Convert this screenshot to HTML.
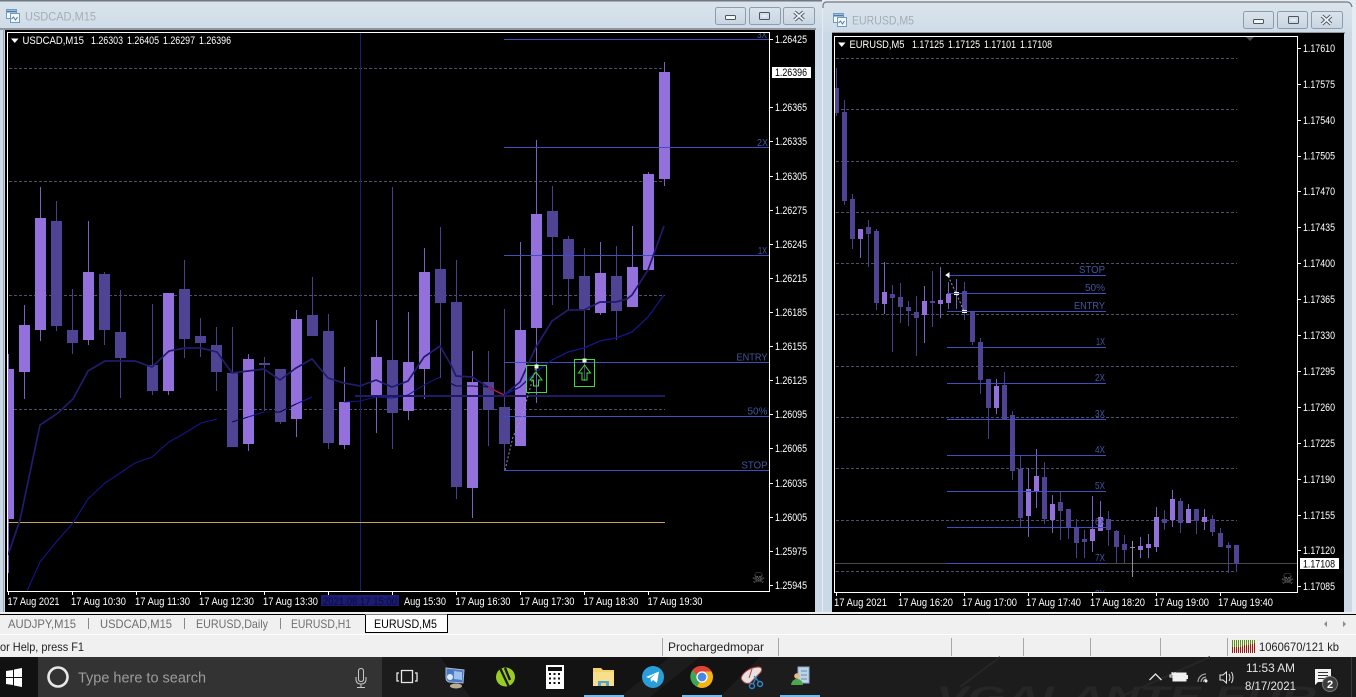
<!DOCTYPE html>
<html><head><meta charset="utf-8"><title>MetaTrader</title>
<style>
html,body{margin:0;padding:0;background:#000;width:1356px;height:697px;overflow:hidden}
svg{display:block;font-family:"Liberation Sans",sans-serif}
.w{fill:#fff;font-size:10.8px}
.k{fill:#000;font-size:10.8px}
.l{fill:#44559c;font-size:10.4px}
.t{fill:#a3adb7;font-size:12px}
.tab{fill:#6e6e6e;font-size:12px}
.st{fill:#222;font-size:12px}
.tk{fill:#e6e6e6;font-size:12px}
.btn{fill:url(#bg);stroke:#8b9dac;stroke-width:1}
</style></head><body>
<svg width="1356" height="697" viewBox="0 0 1356 697" xmlns="http://www.w3.org/2000/svg">
<defs>
<linearGradient id="tg" x1="0" y1="0" x2="0" y2="1"><stop offset="0" stop-color="#dbe4ec"/><stop offset="1" stop-color="#cfdce8"/></linearGradient>
<linearGradient id="bg" x1="0" y1="0" x2="0" y2="1"><stop offset="0" stop-color="#dbe4ec"/><stop offset="1" stop-color="#c8d5e1"/></linearGradient>
<clipPath id="c1"><rect x="8" y="33" width="761" height="558"/></clipPath>
<clipPath id="c2"><rect x="835" y="37" width="462" height="555"/></clipPath>
</defs>

<!-- window frames -->
<rect width="1356" height="614" fill="#e6ecf2"/>
<rect x="0" y="0" width="822" height="614" fill="#cbd8e5"/>
<rect x="0" y="0" width="822" height="28" fill="url(#tg)"/>
<rect x="0" y="0" width="822" height="1.5" fill="#6f7780"/>
<rect x="0" y="28" width="816" height="2" fill="#8e959c"/>
<rect x="3" y="29" width="1" height="583" fill="#9aa6b2"/>
<rect x="5" y="30" width="810" height="582" fill="#000"/>

<path d="M823 614V6q0-4 4-4H1347q4 0 5 5V614z" fill="#cbd8e5"/>
<path d="M823 32V6q0-4 4-4H1347q4 0 5 5V32z" fill="url(#tg)"/>
<path d="M823 8V6q0-4 4-4H1347q4 0 5 5" fill="none" stroke="#6f7780" stroke-width="1.2"/>
<rect x="832" y="32" width="513" height="2" fill="#8e959c"/>
<rect x="832" y="33" width="512" height="579" fill="#000"/>

<!-- titles -->
<g fill="#f4f8fb" stroke="#6f9ac6" stroke-width="1"><rect x="6.5" y="9.5" width="10" height="9"/><rect x="10.5" y="13.5" width="9" height="9"/></g>
<path d="M11.5 19l2-2 2 3 2-3" fill="none" stroke="#4d7ca8"/><path d="M7 11.5h9" stroke="#4d7ca8" stroke-width="2"/>
<text class="t" x="25" y="20.5" textLength="71" lengthAdjust="spacingAndGlyphs">USDCAD,M15</text>
<g fill="#f4f8fb" stroke="#6f9ac6" stroke-width="1"><rect x="833.5" y="13.5" width="10" height="9"/><rect x="837.5" y="17.5" width="9" height="9"/></g>
<path d="M838.5 23l2-2 2 3 2-3" fill="none" stroke="#4d7ca8"/><path d="M834 15.5h9" stroke="#4d7ca8" stroke-width="2"/>
<text class="t" x="852" y="24.5" textLength="62" lengthAdjust="spacingAndGlyphs">EURUSD,M5</text>

<!-- window buttons left -->
<rect class="btn" x="715.5" y="7.5" width="30" height="17" rx="2"/>
<rect class="btn" x="749.5" y="7.5" width="31" height="17" rx="2"/>
<rect class="btn" x="783.5" y="7.5" width="31" height="17" rx="2"/>
<rect x="725.5" y="15.5" width="10" height="4" rx="1" fill="#f4f6f8" stroke="#4a5560"/>
<rect x="759.5" y="12.5" width="10" height="7" rx="1" fill="none" stroke="#4a5560"/><rect x="762" y="15" width="5" height="2" fill="#e8edf2"/>
<path d="M794.5 12l9 8M803.5 12l-9 8" stroke="#4a5560" stroke-width="3.6"/><path d="M794.5 12l9 8M803.5 12l-9 8" stroke="#f2f5f7" stroke-width="1.8"/>
<!-- window buttons right -->
<rect class="btn" x="1243.5" y="11.5" width="30" height="17" rx="2"/>
<rect class="btn" x="1277.5" y="11.5" width="30" height="17" rx="2"/>
<rect class="btn" x="1311.5" y="11.5" width="31" height="17" rx="2"/>
<rect x="1253.5" y="19.5" width="10" height="4" rx="1" fill="#f4f6f8" stroke="#4a5560"/>
<rect x="1288.5" y="16.5" width="10" height="7" rx="1" fill="none" stroke="#4a5560"/><rect x="1291" y="19" width="5" height="2" fill="#e8edf2"/>
<path d="M1322 16l9 8M1331 16l-9 8" stroke="#4a5560" stroke-width="3.6"/><path d="M1322 16l9 8M1331 16l-9 8" stroke="#f2f5f7" stroke-width="1.8"/>

<!-- LEFT CHART -->
<g clip-path="url(#c1)" shape-rendering="crispEdges">
<path d="M9 68.5H665M9 181.5H665M9 295.5H665M9 409.5H665" stroke="#4e4e6e" stroke-dasharray="3 2" fill="none"/>
<path d="M360.5 33V591" stroke="#1e1e72"/>
<path fill="none" stroke="#7a62bb" d="M8.5 354V573M24.5 305V399M40.5 187V341M88.5 221V345M168.5 293V395M248.5 354V451M296.5 310V437M344.5 367V449M376.5 320V433M408.5 312V420M424.5 248V399M472.5 351V518M520.5 242V446M536.5 140V403M600.5 242V315M632.5 226V307M648.5 172V270M664.5 62V186"/>
<path fill="none" stroke="#4a3f8e" d="M56.5 201V331M72.5 289V354M104.5 272V345M120.5 290V398M152.5 304V395M184.5 260V358M200.5 318V357M216.5 327V391M232.5 327V447M264.5 357V411M280.5 369V424M312.5 277V336M328.5 314V449M392.5 187V449M440.5 227V378M456.5 260V499M488.5 351V446M504.5 309V470M552.5 186V305M568.5 236V310M584.5 248V381M616.5 246V340"/>
<path fill="#9370db" d="M8 369h6v150h-6zM19 325h11v47h-11zM35 218h11v112h-11zM83 272h11v68h-11zM163 293h11v98h-11zM243 359h11v85h-11zM291 319h11v100h-11zM339 402h11v43h-11zM371 357h11v40h-11zM403 362h11v49h-11zM419 272h11v97h-11zM467 382h11v106h-11zM515 330h11v116h-11zM531 214h11v114h-11zM595 273h11v40h-11zM627 267h11v40h-11zM643 174h11v96h-11zM659 72h11v107h-11z"/>
<path fill="#4f4394" d="M51 221h11v105h-11zM67 330h11v13h-11zM99 274h11v56h-11zM115 332h11v26h-11zM147 365h11v26h-11zM179 289h11v50h-11zM195 336h11v7h-11zM211 345h11v27h-11zM227 373h11v74h-11zM259 363h11v2h-11zM275 369h11v53h-11zM307 315h11v21h-11zM323 331h11v112h-11zM387 360h11v53h-11zM435 269h11v34h-11zM451 302h11v185h-11zM483 382h11v28h-11zM499 407h11v37h-11zM547 211h11v26h-11zM563 239h11v40h-11zM579 276h11v34h-11zM611 276h11v35h-11z"/>
<path d="M8 522.5H665" stroke="#c8a45c"/>
<path d="M355 396H665" stroke="#1e1a64" stroke-width="2"/>
<path d="M504 39.5H769M504 147.5H769M504 255.5H769M504 362.5H769M504 416.5H769M504 470.5H769" stroke="#3f4fc0" fill="none"/>
</g>
<g clip-path="url(#c1)">
<polyline fill="none" stroke="#211c6e" stroke-width="1.7" points="8,555 20,520 40,425 58,413 73,399 88,371 105,361 135,361 152,367 169,351 185,348 201,348 217,352 232,373 248,371 264,369 280,380 296,368 312,359 328,378 344,383 360,386 376,380 392,387 408,381 424,357 440,346 451,365 456,376 472,377 488,387 504,395 520,382 536,347 552,321 568,310 584,310 600,302 616,302 627,299 632,295 648,270 664,226"/>
<polyline fill="none" stroke="#15158c" stroke-width="1.1" points="27,591 40,562 57,541 73,523 88,499 105,483 135,463 152,457 169,442 185,433 201,423 217,419"/>
<polyline fill="none" stroke="#0a0a50" stroke-width="1" points="232,422 248,417"/>
<polyline fill="none" stroke="#1616a8" stroke-width="1" points="248,417 264,412"/>
<polyline fill="none" stroke="#08083a" stroke-width="1" points="264,412 280,412 296,404"/>
<polyline fill="none" stroke="#1616a8" stroke-width="1" points="296,404 312,397"/>
<polyline fill="none" stroke="#15158c" stroke-width="1" points="344,402 360,401 376,397 392,398 408,395 424,385 440,377"/>
<polyline fill="none" stroke="#0d0d3c" stroke-width="1" points="450,383 456,386 472,386 488,387"/>
<polyline fill="none" stroke="#b01c3c" stroke-width="1.3" points="488,387 504,395"/>
<polyline fill="none" stroke="#15158c" stroke-width="1.3" points="504,395 520,387 536,372 552,360 568,352 584,348 600,341 616,338 632,332 648,317 664,295"/>
<polyline fill="none" stroke="#9a94b0" stroke-width="1" stroke-dasharray="2 2" points="505,470 513,437 522,417 536,367"/>
<g fill="none" stroke="#3cdc3c" stroke-width="1.2" shape-rendering="crispEdges">
<rect x="526.5" y="365.5" width="20" height="27"/><rect x="574.5" y="359.5" width="20" height="27"/></g>
<path d="M536 372l-6 8h3.5v6h5v-6h3.5z" fill="none" stroke="#3cdc3c"/>
<path d="M584.5 365l-6 8h3.5v7h5v-7h3.5z" fill="none" stroke="#3cdc3c"/>
<rect x="534.5" y="364.5" width="4" height="4" fill="#d8ffd8"/><rect x="582.5" y="358.5" width="4" height="4" fill="#d8ffd8"/>
<g class="l">
<text x="757" y="38" textLength="10" lengthAdjust="spacingAndGlyphs">3X</text>
<text x="757" y="146" textLength="11" lengthAdjust="spacingAndGlyphs">2X</text>
<text x="758" y="254" textLength="9" lengthAdjust="spacingAndGlyphs">1X</text>
<text x="736.5" y="360.5" textLength="31" lengthAdjust="spacingAndGlyphs">ENTRY</text>
<text x="747.5" y="414.5" textLength="20" lengthAdjust="spacingAndGlyphs">50%</text>
<text x="741.5" y="468.5" textLength="26" lengthAdjust="spacingAndGlyphs">STOP</text>
</g>
<text x="758.5" y="583" text-anchor="middle" font-size="15" fill="#7a7a7a" font-family="DejaVu Sans,sans-serif">☠</text>
</g>
<path d="M7.5 32.5H769.5V591.5H7.5z" fill="none" stroke="#fff"/>
<path d="M770 39.5h3M770 107.5h3M770 141.5h3M770 176.5h3M770 210.5h3M770 244.5h3M770 278.5h3M770 312.5h3M770 346.5h3M770 380.5h3M770 414.5h3M770 448.5h3M770 483.5h3M770 517.5h3M770 551.5h3M770 585.5h3M8.5 592v3M72.5 592v3M136.5 592v3M200.5 592v3M264.5 592v3M328.5 592v3M392.5 592v3M456.5 592v3M520.5 592v3M584.5 592v3M648.5 592v3" stroke="#fff" fill="none"/>
<path d="M11 38.5h7.5l-3.75 4.5z" fill="#fff"/>
<g class="w">
<text x="22.5" y="44" textLength="61.5" lengthAdjust="spacingAndGlyphs">USDCAD,M15</text>
<text x="91" y="44" textLength="32" lengthAdjust="spacingAndGlyphs">1.26303</text>
<text x="127" y="44" textLength="32" lengthAdjust="spacingAndGlyphs">1.26405</text>
<text x="163" y="44" textLength="32" lengthAdjust="spacingAndGlyphs">1.26297</text>
<text x="199" y="44" textLength="32" lengthAdjust="spacingAndGlyphs">1.26396</text>
<text x="775" y="43" textLength="32" lengthAdjust="spacingAndGlyphs">1.26425</text>
<text x="775" y="111" textLength="32" lengthAdjust="spacingAndGlyphs">1.26365</text>
<text x="775" y="145" textLength="32" lengthAdjust="spacingAndGlyphs">1.26335</text>
<text x="775" y="180" textLength="32" lengthAdjust="spacingAndGlyphs">1.26305</text>
<text x="775" y="214" textLength="32" lengthAdjust="spacingAndGlyphs">1.26275</text>
<text x="775" y="248" textLength="32" lengthAdjust="spacingAndGlyphs">1.26245</text>
<text x="775" y="282" textLength="32" lengthAdjust="spacingAndGlyphs">1.26215</text>
<text x="775" y="316" textLength="32" lengthAdjust="spacingAndGlyphs">1.26185</text>
<text x="775" y="350" textLength="32" lengthAdjust="spacingAndGlyphs">1.26155</text>
<text x="775" y="384" textLength="32" lengthAdjust="spacingAndGlyphs">1.26125</text>
<text x="775" y="418" textLength="32" lengthAdjust="spacingAndGlyphs">1.26095</text>
<text x="775" y="452" textLength="32" lengthAdjust="spacingAndGlyphs">1.26065</text>
<text x="775" y="487" textLength="32" lengthAdjust="spacingAndGlyphs">1.26035</text>
<text x="775" y="521" textLength="32" lengthAdjust="spacingAndGlyphs">1.26005</text>
<text x="775" y="555" textLength="32" lengthAdjust="spacingAndGlyphs">1.25975</text>
<text x="775" y="589" textLength="32" lengthAdjust="spacingAndGlyphs">1.25945</text>
<text x="7.5" y="605" textLength="52" lengthAdjust="spacingAndGlyphs">17 Aug 2021</text>
<text x="71" y="605" textLength="55" lengthAdjust="spacingAndGlyphs">17 Aug 10:30</text>
<text x="135" y="605" textLength="55" lengthAdjust="spacingAndGlyphs">17 Aug 11:30</text>
<text x="199" y="605" textLength="55" lengthAdjust="spacingAndGlyphs">17 Aug 12:30</text>
<text x="263" y="605" textLength="55" lengthAdjust="spacingAndGlyphs">17 Aug 13:30</text>
<text x="404" y="605" textLength="42" lengthAdjust="spacingAndGlyphs">Aug 15:30</text>
<text x="455.5" y="605" textLength="55" lengthAdjust="spacingAndGlyphs">17 Aug 16:30</text>
<text x="519.5" y="605" textLength="55" lengthAdjust="spacingAndGlyphs">17 Aug 17:30</text>
<text x="583.5" y="605" textLength="55" lengthAdjust="spacingAndGlyphs">17 Aug 18:30</text>
<text x="647.5" y="605" textLength="55" lengthAdjust="spacingAndGlyphs">17 Aug 19:30</text>
</g>
<rect x="321" y="595" width="78" height="11" fill="#1b1b72"/>
<text x="323" y="605" font-size="10.8" fill="#0b0b3a" textLength="74" lengthAdjust="spacingAndGlyphs">2021.08.17 15:00</text>
<rect x="772" y="67" width="39" height="11" fill="#fff"/>
<text class="k" x="775" y="76" textLength="32" lengthAdjust="spacingAndGlyphs">1.26396</text>

<!-- RIGHT CHART -->
<g clip-path="url(#c2)" shape-rendering="crispEdges">
<path d="M836 58.5H1237M836 109.5H1237M836 161.5H1237M836 212.5H1237M836 263.5H1237M836 314.5H1237M836 366.5H1237M836 417.5H1237M836 468.5H1237M836 520.5H1237M836 571.5H1237" stroke="#4e4e6e" stroke-dasharray="3 2" fill="none"/>
<path d="M835 563.5H1297" stroke="#4a4a4a"/>
<path fill="none" stroke="#4a3f8e" d="M836.5 68V116M844.5 100V205M852.5 194V249M868.5 220V267M876.5 229V310M892.5 285V352M900.5 283V323M908.5 301V326M916.5 296V356M932.5 271V327M964.5 282V320M972.5 312V345M980.5 338V394M988.5 379V439M1004.5 372V419M1012.5 411V480M1020.5 456V527M1044.5 462V524M1060.5 491V540M1068.5 509V539M1076.5 519V558M1084.5 530V558M1108.5 511V546M1116.5 530V563M1124.5 535V563M1164.5 510V530M1180.5 498V533M1196.5 509V534M1212.5 515V536M1220.5 528V547M1228.5 542V573M1236.5 545V572"/>
<path fill="none" stroke="#7a62bb" d="M860.5 229V258M884.5 262V314M924.5 286V343M940.5 267V318M948.5 282V309M956.5 279V309M996.5 379V414M1028.5 468V537M1036.5 449V508M1052.5 495V533M1092.5 496V552M1100.5 501V531M1140.5 537V558M1148.5 534V558M1156.5 507V552M1172.5 490V527M1188.5 504V523M1204.5 509V530"/>
<path fill="none" stroke="#8e8ea0" d="M1132.5 541V577"/>
<path fill="#4f4394" d="M835 88h4v25h-4zM842 112h5v89h-5zM850 199h5v40h-5zM866 227h5v7h-5zM874 231h5v72h-5zM890 294h5v4h-5zM898 297h5v10h-5zM906 307h5v4h-5zM914 312h5v6h-5zM930 301h5v2h-5zM962 291h5v22h-5zM970 312h5v30h-5zM978 342h5v38h-5zM986 379h5v29h-5zM1002 385h5v34h-5zM1010 415h5v56h-5zM1018 469h5v49h-5zM1042 477h5v42h-5zM1058 502h5v9h-5zM1066 509h5v18h-5zM1074 527h5v16h-5zM1082 539h5v3h-5zM1106 519h5v11h-5zM1114 531h5v16h-5zM1122 544h5v6h-5zM1162 519h5v4h-5zM1178 501h5v22h-5zM1194 509h5v12h-5zM1210 519h5v13h-5zM1218 533h5v14h-5zM1226 545h5v3h-5zM1234 545h5v19h-5z"/>
<path fill="#9370db" d="M858 229h5v10h-5zM882 292h5v12h-5zM922 301h5v14h-5zM938 300h5v4h-5zM946 294h5v9h-5zM994 386h5v22h-5zM1026 489h5v27h-5zM1034 476h5v15h-5zM1050 504h5v16h-5zM1090 529h5v12h-5zM1098 517h5v14h-5zM1138 546h5v4h-5zM1146 544h5v4h-5zM1154 517h5v30h-5zM1170 499h5v21h-5zM1186 509h5v14h-5zM1202 517h5v5h-5z"/>
<path fill="#9090a8" d="M1130 547h5v1h-5z"/>
<path d="M947 275.5H1106M947 293.5H1106M947 311.5H1106M947 347.5H1106M947 383.5H1106M947 419.5H1106M947 455.5H1106M947 491.5H1106M947 527.5H1106M947 563.5H1106" stroke="#3f4fc0" fill="none"/>
</g>
<g clip-path="url(#c2)">
<polyline fill="none" stroke="#9a94b0" stroke-dasharray="2 2" points="948,276 956,293 964,311"/>
<path d="M946 275l3-2v4zM954 292.5h5M954 294.5h5M962 310.5h5M962 312.5h5" stroke="#fff" fill="#fff" stroke-width="1"/>
<g class="l">
<text x="1079" y="273" textLength="26" lengthAdjust="spacingAndGlyphs">STOP</text>
<text x="1085" y="291" textLength="20" lengthAdjust="spacingAndGlyphs">50%</text>
<text x="1074" y="309" textLength="31" lengthAdjust="spacingAndGlyphs">ENTRY</text>
<text x="1096" y="345" textLength="9" lengthAdjust="spacingAndGlyphs">1X</text>
<text x="1095" y="381" textLength="10" lengthAdjust="spacingAndGlyphs">2X</text>
<text x="1095" y="417" textLength="10" lengthAdjust="spacingAndGlyphs">3X</text>
<text x="1095" y="453" textLength="10" lengthAdjust="spacingAndGlyphs">4X</text>
<text x="1095" y="489" textLength="10" lengthAdjust="spacingAndGlyphs">5X</text>
<text x="1095" y="525" textLength="10" lengthAdjust="spacingAndGlyphs">6X</text>
<text x="1095" y="561" textLength="10" lengthAdjust="spacingAndGlyphs">7X</text>
<text x="1095" y="597" textLength="10" lengthAdjust="spacingAndGlyphs">8X</text>
</g>
<text x="1287.5" y="584" text-anchor="middle" font-size="15" fill="#7a7a7a" font-family="DejaVu Sans,sans-serif">☠</text>
<path d="M1246 37h8l-4 4z" fill="#4a4a4a"/>
</g>
<path d="M834.5 36.5H1297.5V592.5H834.5z" fill="none" stroke="#fff"/>
<path d="M1298 48.5h3M1298 84.5h3M1298 120.5h3M1298 156.5h3M1298 191.5h3M1298 227.5h3M1298 263.5h3M1298 299.5h3M1298 335.5h3M1298 371.5h3M1298 407.5h3M1298 443.5h3M1298 479.5h3M1298 515.5h3M1298 550.5h3M1298 586.5h3M836.5 593v3M900.5 593v3M964.5 593v3M1028.5 593v3M1092.5 593v3M1156.5 593v3M1220.5 593v3" stroke="#fff" fill="none"/>
<path d="M838 42.5h7.5l-3.75 4.5z" fill="#fff"/>
<g class="w">
<text x="849.5" y="48" textLength="55" lengthAdjust="spacingAndGlyphs">EURUSD,M5</text>
<text x="912" y="48" textLength="32" lengthAdjust="spacingAndGlyphs">1.17125</text>
<text x="948" y="48" textLength="32" lengthAdjust="spacingAndGlyphs">1.17125</text>
<text x="984" y="48" textLength="32" lengthAdjust="spacingAndGlyphs">1.17101</text>
<text x="1020" y="48" textLength="32" lengthAdjust="spacingAndGlyphs">1.17108</text>
<text x="1303" y="52" textLength="32" lengthAdjust="spacingAndGlyphs">1.17610</text>
<text x="1303" y="88" textLength="32" lengthAdjust="spacingAndGlyphs">1.17575</text>
<text x="1303" y="124" textLength="32" lengthAdjust="spacingAndGlyphs">1.17540</text>
<text x="1303" y="159.5" textLength="32" lengthAdjust="spacingAndGlyphs">1.17505</text>
<text x="1303" y="195" textLength="32" lengthAdjust="spacingAndGlyphs">1.17470</text>
<text x="1303" y="231" textLength="32" lengthAdjust="spacingAndGlyphs">1.17435</text>
<text x="1303" y="267" textLength="32" lengthAdjust="spacingAndGlyphs">1.17400</text>
<text x="1303" y="303" textLength="32" lengthAdjust="spacingAndGlyphs">1.17365</text>
<text x="1303" y="339" textLength="32" lengthAdjust="spacingAndGlyphs">1.17330</text>
<text x="1303" y="375" textLength="32" lengthAdjust="spacingAndGlyphs">1.17295</text>
<text x="1303" y="411" textLength="32" lengthAdjust="spacingAndGlyphs">1.17260</text>
<text x="1303" y="447" textLength="32" lengthAdjust="spacingAndGlyphs">1.17225</text>
<text x="1303" y="483" textLength="32" lengthAdjust="spacingAndGlyphs">1.17190</text>
<text x="1303" y="519" textLength="32" lengthAdjust="spacingAndGlyphs">1.17155</text>
<text x="1303" y="554" textLength="32" lengthAdjust="spacingAndGlyphs">1.17120</text>
<text x="1303" y="590" textLength="32" lengthAdjust="spacingAndGlyphs">1.17085</text>
<text x="834" y="606" textLength="53" lengthAdjust="spacingAndGlyphs">17 Aug 2021</text>
<text x="898" y="606" textLength="55" lengthAdjust="spacingAndGlyphs">17 Aug 16:20</text>
<text x="962" y="606" textLength="55" lengthAdjust="spacingAndGlyphs">17 Aug 17:00</text>
<text x="1026" y="606" textLength="55" lengthAdjust="spacingAndGlyphs">17 Aug 17:40</text>
<text x="1090" y="606" textLength="55" lengthAdjust="spacingAndGlyphs">17 Aug 18:20</text>
<text x="1154" y="606" textLength="55" lengthAdjust="spacingAndGlyphs">17 Aug 19:00</text>
<text x="1218" y="606" textLength="55" lengthAdjust="spacingAndGlyphs">17 Aug 19:40</text>
</g>
<rect x="1300" y="558" width="39" height="11" fill="#fff"/>
<text class="k" x="1303" y="567.5" textLength="32" lengthAdjust="spacingAndGlyphs">1.17108</text>

<!-- tab bar -->
<rect x="0" y="612" width="1356" height="45" fill="#f0f0f0"/>
<rect x="0" y="614" width="1356" height="1" fill="#000"/>
<rect x="0" y="634" width="1356" height="1" fill="#fff"/>
<rect x="365" y="614.5" width="82" height="18" fill="#fff"/>
<path d="M365.5 615V632.5H447.5V614" fill="none" stroke="#000"/>
<path d="M88.5 618v11M184.5 618v11M280.5 618v11" stroke="#888"/>
<text class="tab" x="8" y="628" textLength="68" lengthAdjust="spacingAndGlyphs">AUDJPY,M15</text>
<text class="tab" x="100" y="628" textLength="72" lengthAdjust="spacingAndGlyphs">USDCAD,M15</text>
<text class="tab" x="196" y="628" textLength="72" lengthAdjust="spacingAndGlyphs">EURUSD,Daily</text>
<text class="tab" x="291" y="628" textLength="60" lengthAdjust="spacingAndGlyphs">EURUSD,H1</text>
<text x="374" y="628" font-size="12" fill="#000" textLength="63" lengthAdjust="spacingAndGlyphs">EURUSD,M5</text>
<path d="M1327 621l-3 3 3 3zM1343 621l3 3-3 3z" fill="#8a8a8a"/>

<!-- status bar -->
<text class="st" x="0" y="651" textLength="84" lengthAdjust="spacingAndGlyphs">or Help, press F1</text>
<text class="st" x="668" y="651" textLength="96" lengthAdjust="spacingAndGlyphs">Prochargedmopar</text>
<text class="st" x="1259" y="651" textLength="80" lengthAdjust="spacingAndGlyphs">1060670/121 kb</text>
<path d="M662.5 638v18M778.5 638v18M951.5 638v18M1023.5 638v18M1090.5 638v18M1160.5 638v18M1227.5 638v18" stroke="#a8a8a8"/>
<g shape-rendering="crispEdges">
<path d="M1232.5 640v7M1234.5 640v7M1236.5 640v7M1238.5 640v7M1240.5 640v7M1242.5 640v6M1244.5 640v5M1246.5 640v5M1248.5 640v5M1250.5 640v4M1252.5 640v4M1254.5 640v3" stroke="#5d8f10"/>
<path d="M1232.5 647v6M1234.5 647v6M1236.5 647v6M1238.5 647v6M1240.5 647v6M1242.5 646v7M1244.5 645v8M1246.5 645v8M1248.5 645v8M1250.5 644v9M1252.5 644v9M1254.5 643v10" stroke="#a01510"/>
</g>

<!-- taskbar -->
<rect x="0" y="657" width="1356" height="40" fill="#1c1c1c"/>
<path d="M440 657h230l-50 40H470zM700 657h60l-40 40h-70z" fill="#131313"/>
<rect x="0" y="657" width="38" height="40" fill="#111"/>
<rect x="38" y="657" width="344" height="40" fill="#333"/>
<text x="936" y="707" font-size="30" font-weight="bold" font-style="italic" fill="#262626" textLength="380" lengthAdjust="spacingAndGlyphs">VGALANTE EUR</text>
<path d="M1000 657l-40 30M1210 657l-90 40" stroke="#262626" stroke-width="2"/>
<path d="M6 671l7-1v7H6zM14 669.5l8-1.5v9h-8zM6 678h7v7l-7-1zM14 678h8v9l-8-1.5z" fill="#fff"/>
<circle cx="58" cy="677" r="9.5" fill="none" stroke="#e8e8e8" stroke-width="2.6"/>
<text x="78" y="682.5" font-size="15" fill="#9c9c9c" textLength="128" lengthAdjust="spacingAndGlyphs">Type here to search</text>
<path d="M358.5 671q0-2.5 2.5-2.5t2.5 2.5v8q0 2.5-2.5 2.5t-2.5-2.5zM356 677v2q0 5 5 5t5-5v-2M361 684v3M357 687.5h8" fill="none" stroke="#c8c8c8"/>
<path d="M401.5 670.5h11v12h-11zM399 673h-2v8h2M415 673h2v8h-2" fill="none" stroke="#e8e8e8" stroke-width="1.3"/>

<!-- app icons -->
<path d="M446 668l18 2-1 13-14-1q-3-1-3-4z" fill="#4a78c8" stroke="#aebccc"/><path d="M454 671l8 1v8l-8-1z" fill="#9ec0ee"/><ellipse cx="456" cy="686" rx="6" ry="2.5" fill="#b8ae98"/><circle cx="450" cy="677" r="3" fill="#dfe8f2"/>
<circle cx="505.5" cy="677" r="9.5" fill="#9acd22"/><path d="M500 668l9 19M505 668l5 12" stroke="#1a1a1a" stroke-width="2.4" fill="none"/>
<rect x="546" y="665" width="18" height="24" fill="#fff"/><rect x="548" y="667" width="14" height="4" fill="#111"/>
<path d="M549 673h2v2h-2zM553.5 673h2v2h-2zM558 673h2v2h-2zM549 677.5h2v2h-2zM553.5 677.5h2v2h-2zM558 677.5h2v2h-2zM549 682h2v2h-2zM553.5 682h2v2h-2zM558 682h2v2h-2z" fill="#111"/>
<path d="M593 668h8l2 2h11v16h-21z" fill="#f3d36c"/><rect x="593" y="672" width="21" height="14" fill="#f8e08a"/><path d="M598 686v-5h11v5z" fill="#4aa6d8"/><rect x="601" y="683" width="5" height="3" fill="#f3d36c"/>
<circle cx="653" cy="677" r="11" fill="#2a9ed8"/><path d="M646 677l13-5.5-2 11.5-4-3-2 2-.5-3.5 5-4.5-6.5 4z" fill="#fff"/>
<circle cx="702" cy="677" r="11" fill="#f2b416"/><path d="M702 666a11 11 0 0 1 9.5 5.5H702a5.5 5.5 0 0 0-5.3 4L692.5 670a11 11 0 0 1 9.5-4z" fill="#e04236"/><path d="M692.5 670a11 11 0 0 0 4.4 16.7l4-6.8a5.5 5.5 0 0 1-4.2-4.4z" fill="#3aa757"/><circle cx="702" cy="677" r="5" fill="#4a86e8" stroke="#fff" stroke-width="1.3"/>
<path d="M742 680c-3-3 4-12 16-13 5 0 4 4 2 6l-10 10c-3 1-6 0-8-3z" fill="#e8e2e0" stroke="#b04848"/><path d="M752 669l-3 9" stroke="#b84040"/><circle cx="752" cy="686" r="2.5" fill="none" stroke="#2f86c8" stroke-width="1.5"/><circle cx="760" cy="684" r="2.5" fill="none" stroke="#2f86c8" stroke-width="1.5"/><path d="M753 684l4-8M759 682l-5-6" stroke="#2f86c8" stroke-width="1.3"/>
<rect x="798" y="667" width="11" height="16" fill="#bcd4e8" stroke="#8aa8c4"/><path d="M801 671h6M801 675h6M801 679h6" stroke="#6a8ca8"/><circle cx="797" cy="676" r="2.8" fill="#e8b88a"/><path d="M791 685q1-6 6-6t6 6z" fill="#4aa84a"/>
<g fill="#76b9ed"><rect x="584" y="695" width="40" height="2"/><rect x="682" y="695" width="40" height="2"/><rect x="780" y="695" width="40" height="2"/></g>

<!-- tray -->
<path d="M1149.5 680l6-6 6 6" fill="none" stroke="#e8e8e8" stroke-width="1.3"/>
<rect x="1173" y="673" width="13" height="8" fill="#f0f0f0" stroke="#eee"/><rect x="1186" y="675" width="2" height="4" fill="#eee"/><path d="M1172 672v3M1175 672v3M1170 675h7v2h-7zM1173.5 677v3" stroke="#eee" fill="none"/>
<path d="M1198 682a8 8 0 0 1 8-8M1201 682a5 5 0 0 1 5-5M1203.5 682a3 3 0 0 1 3-3" fill="none" stroke="#b8b8b8"/><circle cx="1206" cy="681" r="1.5" fill="#eee"/>
<path d="M1220 675h3l3.5-3v11l-3.5-3h-3zM1229 674q2 3.5 0 7M1231.5 672q3 5.5 0 11" fill="none" stroke="#e6e6e6"/>
<text class="tk" x="1246" y="672" textLength="49" lengthAdjust="spacingAndGlyphs">11:53 AM</text>
<text class="tk" x="1245" y="690" textLength="51" lengthAdjust="spacingAndGlyphs">8/17/2021</text>
<path d="M1315 669h16v13h-13l-3 3z" fill="#f2f2f2"/><path d="M1318 672.5h10M1318 675.5h10M1318 678.5h10" stroke="#333"/>
<circle cx="1330" cy="684" r="7.5" fill="#3c3c3c" stroke="#777"/>
<text x="1330" y="688" text-anchor="middle" font-size="11" font-weight="bold" fill="#fff">2</text>
<rect x="1351" y="657" width="1" height="40" fill="#3a3a3a"/>
</svg>
</body></html>
